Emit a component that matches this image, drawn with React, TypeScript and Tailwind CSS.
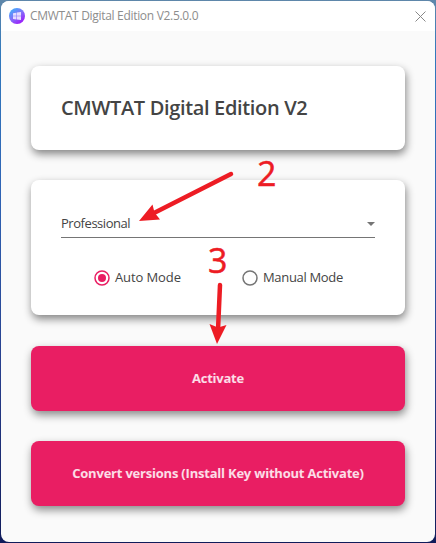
import React from "react";

const card =
  "rounded-lg bg-white shadow-[1px_4px_9px_rgba(0,0,0,0.48)]";
const action =
  "flex w-full items-center justify-center rounded-lg bg-[#e91e63] text-[13px] font-bold text-white/85 shadow-[1px_4px_8px_rgba(0,0,0,0.45)]";

function AppLogo() {
  return (
    <svg className="h-4 w-4" viewBox="0 0 16 16">
      <defs>
        <linearGradient id="logo" x1="0.1" y1="0" x2="0.8" y2="1">
          <stop offset="0" stopColor="#38b6fa" />
          <stop offset="0.5" stopColor="#8270fa" />
          <stop offset="1" stopColor="#a010fa" />
        </linearGradient>
      </defs>
      <circle cx="8" cy="8" r="8" fill="url(#logo)" />
      <path
        d="M4 5.2 7.3 4.7V7.8H4ZM7.8 4.6 12 4V7.8H7.8ZM4 8.3H7.3V11.4L4 10.9ZM7.8 8.3H12V12.1L7.8 11.5Z"
        fill="#e5dcff"
      />
    </svg>
  );
}

function Radio({ label, checked, className }: { label: string; checked?: boolean; className: string }) {
  return (
    <label className={`flex items-center gap-[5px] ${className}`}>
      <svg className="h-4 w-4" viewBox="0 0 16 16">
        <circle cx="8" cy="8" r="7" fill="none" stroke={checked ? "#e91e63" : "#757575"} strokeWidth="1.5" />
        {checked && <circle cx="8" cy="8" r="4" fill="#e91e63" />}
      </svg>
      <span>{label}</span>
    </label>
  );
}

function Annotations() {
  return (
    <div className="pointer-events-none absolute inset-0 text-[34px] leading-none text-[#ed1c24] [-webkit-text-stroke:0.5px_#ed1c24]">
      <svg className="absolute inset-0" width="436" height="543" viewBox="0 0 436 543">
        <g fill="#ed1c24" stroke="#ed1c24" strokeLinecap="round">
          <path d="M231 174 152 214" fill="none" strokeWidth="4.5" />
          <path d="M139 221 152.5 204.5 154.5 212.5 160 219.5Z" stroke="none" />
          <path d="M220 285 218 330" fill="none" strokeWidth="4.5" />
          <path d="M217 344 209.5 324 218 327.5 226.5 325Z" stroke="none" />
        </g>
      </svg>
      <span className="absolute left-[257px] top-[156px]">2</span>
      <span className="absolute left-[208px] top-[243px]">3</span>
    </div>
  );
}

export default function App() {
  return (
    <div className="relative h-[543px] w-[436px] overflow-hidden bg-[linear-gradient(180deg,#5f87aa_0%,#3179bd_10%,#2f64b5_35%,#263c8a_70%,#101b5a_100%)] p-px font-['Open_Sans','Noto_Sans',sans-serif] text-[#444]">
      <div className="flex h-full flex-col overflow-hidden rounded-lg bg-[#fafafa]">
        <header className="flex h-[30px] shrink-0 items-center bg-white pl-2 pr-[9px] text-[12px] text-[#8d8d8d]">
          <AppLogo />
          <span className="ml-[5px] tracking-[-0.31px]">CMWTAT Digital Edition V2.5.0.0</span>
          <svg className="ml-auto h-[11px] w-[11px]" viewBox="0 0 11 11" stroke="#888" strokeWidth="1">
            <path d="M.5 .5 10.5 10.5M10.5 .5 .5 10.5" />
          </svg>
        </header>
        <main className="flex flex-col px-[30px] pt-[35px]">
          <section className={`${card} flex h-[84px] items-center px-[30px]`}>
            <h1 className="whitespace-nowrap text-[20px] font-semibold tracking-[-0.34px]">CMWTAT Digital Edition V2</h1>
          </section>
          <section className={`${card} mt-[30px] h-[135px] px-[30px] pt-[30px] text-[13px]`}>
            <div className="flex h-7 items-center justify-between border-b border-[#757575]">
              <span className="tracking-[-0.45px]">Professional</span>
              <svg className="h-1 w-2" viewBox="0 0 8 4">
                <path d="M0 0H8L4 4Z" fill="#757575" />
              </svg>
            </div>
            <div className="flex h-[79px] items-center pl-[33px]">
              <Radio label="Auto Mode" checked className="w-[148px] tracking-[-0.1px]" />
              <Radio label="Manual Mode" className="tracking-[-0.33px]" />
            </div>
          </section>
          <button className={`${action} mt-[31px] h-[65px] tracking-[-0.25px]`}>Activate</button>
          <button className={`${action} mt-[30px] h-[65px] tracking-[-0.21px]`}>Convert versions (Install Key without Activate)</button>
        </main>
      </div>
      <Annotations />
    </div>
  );
}
